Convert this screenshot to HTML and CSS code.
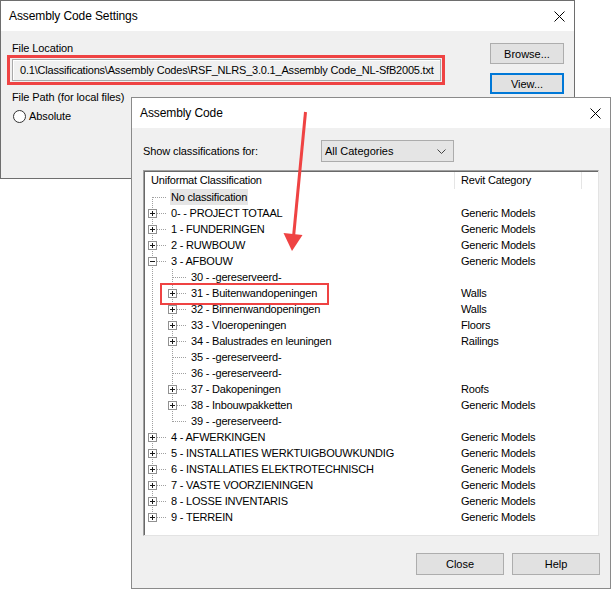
FILE: index.html
```html
<!DOCTYPE html>
<html>
<head>
<meta charset="utf-8">
<link rel="stylesheet" href="styles.css">
</head>
<body>
<div class="desk">

  <div class="win win1">
    <div class="titlebar">
      <span class="ttl">Assembly Code Settings</span>
      <svg class="xicon" width="11" height="11" viewBox="0 0 11 11"><path d="M0.5 0.5L10.5 10.5M10.5 0.5L0.5 10.5" stroke="#000" stroke-width="1"/></svg>
    </div>
    <div class="body1">
      <div class="leftcol">
        <div class="lab">File Location</div>
        <div class="field">0.1\Classifications\Assembly Codes\RSF_NLRS_3.0.1_Assembly Code_NL-SfB2005.txt</div>
        <div class="lab lab2">File Path (for local files)</div>
        <div class="radiorow"><span class="radio"></span><span>Absolute</span></div>
      </div>
      <div class="rightcol">
        <div class="btn">Browse...</div>
        <div class="btn btn-focus">View...</div>
      </div>
    </div>
  </div>

  <div class="win win2">
    <div class="titlebar tb2">
      <span class="ttl">Assembly Code</span>
      <svg class="xicon" width="11" height="11" viewBox="0 0 11 11"><path d="M0.5 0.5L10.5 10.5M10.5 0.5L0.5 10.5" stroke="#000" stroke-width="1"/></svg>
    </div>
    <div class="body2">
      <div class="showrow">
        <span class="showlab">Show classifications for:</span>
        <div class="combo"><span>All Categories</span>
          <svg width="9" height="5" viewBox="0 0 9 5"><path d="M0.5 0.5L4.5 4.5L8.5 0.5" stroke="#444" fill="none"/></svg>
        </div>
      </div>
      <div class="treebox">
        <div class="hdr"><div class="h1">Uniformat Classification</div><div class="h2">Revit Category</div></div>
        <div class="row"><div class="tc"><span class="c first"></span><span class="lbl sel">No classification</span></div><div class="cat"></div></div>
        <div class="row"><div class="tc"><span class="c tee"><i class="bx"></i></span><span class="lbl">0- - PROJECT TOTAAL</span></div><div class="cat">Generic Models</div></div>
        <div class="row"><div class="tc"><span class="c tee"><i class="bx"></i></span><span class="lbl">1 - FUNDERINGEN</span></div><div class="cat">Generic Models</div></div>
        <div class="row"><div class="tc"><span class="c tee"><i class="bx"></i></span><span class="lbl">2 - RUWBOUW</span></div><div class="cat">Generic Models</div></div>
        <div class="row"><div class="tc"><span class="c tee"><i class="bx minus"></i></span><span class="lbl">3 - AFBOUW</span></div><div class="cat">Generic Models</div></div>
        <div class="row"><div class="tc"><span class="c vert"></span><span class="c tee"></span><span class="lbl">30 - -gereserveerd-</span></div><div class="cat"></div></div>
        <div class="row"><div class="tc"><span class="c vert"></span><span class="c tee"><i class="bx"></i></span><span class="lbl">31 - Buitenwandopeningen</span></div><div class="cat">Walls</div></div>
        <div class="row"><div class="tc"><span class="c vert"></span><span class="c tee"><i class="bx"></i></span><span class="lbl">32 - Binnenwandopeningen</span></div><div class="cat">Walls</div></div>
        <div class="row"><div class="tc"><span class="c vert"></span><span class="c tee"><i class="bx"></i></span><span class="lbl">33 - Vloeropeningen</span></div><div class="cat">Floors</div></div>
        <div class="row"><div class="tc"><span class="c vert"></span><span class="c tee"><i class="bx"></i></span><span class="lbl">34 - Balustrades en leuningen</span></div><div class="cat">Railings</div></div>
        <div class="row"><div class="tc"><span class="c vert"></span><span class="c tee"></span><span class="lbl">35 - -gereserveerd-</span></div><div class="cat"></div></div>
        <div class="row"><div class="tc"><span class="c vert"></span><span class="c tee"></span><span class="lbl">36 - -gereserveerd-</span></div><div class="cat"></div></div>
        <div class="row"><div class="tc"><span class="c vert"></span><span class="c tee"><i class="bx"></i></span><span class="lbl">37 - Dakopeningen</span></div><div class="cat">Roofs</div></div>
        <div class="row"><div class="tc"><span class="c vert"></span><span class="c tee"><i class="bx"></i></span><span class="lbl">38 - Inbouwpakketten</span></div><div class="cat">Generic Models</div></div>
        <div class="row"><div class="tc"><span class="c vert"></span><span class="c last"></span><span class="lbl">39 - -gereserveerd-</span></div><div class="cat"></div></div>
        <div class="row"><div class="tc"><span class="c tee"><i class="bx"></i></span><span class="lbl">4 - AFWERKINGEN</span></div><div class="cat">Generic Models</div></div>
        <div class="row"><div class="tc"><span class="c tee"><i class="bx"></i></span><span class="lbl">5 - INSTALLATIES WERKTUIGBOUWKUNDIG</span></div><div class="cat">Generic Models</div></div>
        <div class="row"><div class="tc"><span class="c tee"><i class="bx"></i></span><span class="lbl">6 - INSTALLATIES ELEKTROTECHNISCH</span></div><div class="cat">Generic Models</div></div>
        <div class="row"><div class="tc"><span class="c tee"><i class="bx"></i></span><span class="lbl">7 - VASTE VOORZIENINGEN</span></div><div class="cat">Generic Models</div></div>
        <div class="row"><div class="tc"><span class="c tee"><i class="bx"></i></span><span class="lbl">8 - LOSSE INVENTARIS</span></div><div class="cat">Generic Models</div></div>
        <div class="row"><div class="tc"><span class="c last"><i class="bx"></i></span><span class="lbl">9 - TERREIN</span></div><div class="cat">Generic Models</div></div>
      </div>
      <div class="btnrow">
        <div class="btn btn2">Close</div>
        <div class="btn btn2">Help</div>
      </div>
    </div>
  </div>

  <div class="mark mark-field"></div>
  <div class="mark mark-row"></div>
  <svg class="arrow" width="611" height="589" viewBox="0 0 611 589">
    <line x1="305.5" y1="112" x2="293.6" y2="236" stroke="#ef4343" stroke-width="3"/>
    <polygon points="283.5,233 302.5,235 292,251" fill="#ef4343"/>
  </svg>
</div>
</body>
</html>
```

FILE: styles.css
```css
html, body {
  margin: 0;
  padding: 0;
  background: #fff;
}
.desk {
  position: relative;
  width: 611px;
  height: 589px;
  overflow: hidden;
  font-family: "Liberation Sans", Arial, sans-serif;
  font-size: 11px;
  color: #000;
}
.win {
  position: absolute;
  box-sizing: border-box;
  background: #f0f0f0;
  display: flex;
  flex-direction: column;
}
.win1 {
  left: 0;
  top: 0;
  width: 575px;
  height: 179px;
  border: 1px solid #6e6e6e;
}
.win2 {
  left: 131px;
  top: 97px;
  width: 480px;
  height: 492px;
  border: 1px solid #8a8a8a;
}
.titlebar {
  flex: none;
  height: 30px;
  background: #fff;
  display: flex;
  align-items: center;
  justify-content: space-between;
  padding: 0 9px 0 8px;
  font-size: 12px;
}
.ttl {
  letter-spacing: -0.1px;
}
.xicon {
  display: block;
}
.body1 {
  flex: 1;
  display: flex;
  justify-content: space-between;
  padding: 9px 10px 0 11px;
}
.leftcol {
  display: flex;
  flex-direction: column;
  letter-spacing: -0.1px;
}
.lab {
  line-height: 16px;
}
.lab2 {
  margin-top: 8px;
}
.field {
  margin-top: 3px;
  width: 429px;
  height: 22px;
  box-sizing: border-box;
  border: 1px solid #a9a9a9;
  box-shadow: inset 1px 1px 0 #fff;
  background: #f0f0f0;
  padding-left: 7px;
  line-height: 20px;
  white-space: nowrap;
  overflow: hidden;
  font-size: 11px;
  letter-spacing: -0.2px;
}
.radiorow {
  margin-top: 3px;
  display: flex;
  align-items: center;
  gap: 3px;
  line-height: 16px;
  padding-left: 1px;
}
.radio {
  width: 13px;
  height: 13px;
  box-sizing: border-box;
  border: 1px solid #333;
  border-radius: 50%;
  background: #fff;
}
.rightcol {
  display: flex;
  flex-direction: column;
  gap: 9px;
  margin-top: 3px;
}
.btn {
  width: 74px;
  height: 21px;
  box-sizing: border-box;
  background: #e1e1e1;
  border: 1px solid #adadad;
  display: flex;
  align-items: center;
  justify-content: center;
}
.btn-focus {
  border: 2px solid #0078d7;
}
.body2 {
  flex: 1;
  display: flex;
  flex-direction: column;
  padding: 12px 11px 13px 11px;
}
.showrow {
  display: flex;
  align-items: center;
  height: 22px;
}
.showlab {
  width: 178px;
  letter-spacing: -0.1px;
}
.combo {
  width: 133px;
  height: 22px;
  box-sizing: border-box;
  background: #e5e5e5;
  border: 1px solid #acacac;
  display: flex;
  align-items: center;
  justify-content: space-between;
  padding: 0 7px 0 3px;
}
.combo svg {
  display: block;
}
.treebox {
  margin-top: 8px;
  flex: 1;
  background: #fff;
  border: 1px solid;
  border-color: #a0a0a0 #e3e3e3 #e3e3e3 #a0a0a0;
  padding: 1px;
  box-shadow: inset 1px 1px 0 #696969;
  letter-spacing: -0.2px;
}
.hdr {
  display: flex;
  height: 17px;
  line-height: 17px;
}
.h1 {
  width: 310px;
  box-sizing: border-box;
  padding-left: 6px;
  border-right: 1px solid #e5e5e5;
}
.h2 {
  width: 127px;
  box-sizing: border-box;
  padding-left: 6px;
  border-right: 1px solid #e5e5e5;
}
.row {
  display: flex;
  height: 16px;
  line-height: 16px;
}
.tc {
  width: 309px;
  flex: none;
  display: flex;
  padding-left: 1px;
  box-sizing: border-box;
}
.cat {
  padding-left: 7px;
  white-space: nowrap;
}
.lbl {
  margin-left: 4px;
  padding: 0 1px;
  white-space: nowrap;
}
.sel {
  background: #e5e5e5;
}
.c {
  display: block;
  flex: none;
  width: 20px;
  height: 16px;
  background-repeat: no-repeat;
}
.vert {
  background-image: repeating-linear-gradient(#a0a0a0 0 1px, transparent 1px 2px);
  background-position: 6px 0;
  background-size: 1px 16px;
}
.tee {
  background-image:
    repeating-linear-gradient(#a0a0a0 0 1px, transparent 1px 2px),
    repeating-linear-gradient(90deg, transparent 0 1px, #a0a0a0 1px 2px);
  background-position: 6px 0, 6px 8px;
  background-size: 1px 16px, 14px 1px;
}
.last {
  background-image:
    repeating-linear-gradient(#a0a0a0 0 1px, transparent 1px 2px),
    repeating-linear-gradient(90deg, transparent 0 1px, #a0a0a0 1px 2px);
  background-position: 6px 0, 6px 8px;
  background-size: 1px 9px, 14px 1px;
}
.first {
  background-image:
    repeating-linear-gradient(#a0a0a0 0 1px, transparent 1px 2px),
    repeating-linear-gradient(90deg, transparent 0 1px, #a0a0a0 1px 2px);
  background-position: 6px 8px, 6px 8px;
  background-size: 1px 8px, 14px 1px;
}
.bx {
  display: block;
  width: 9px;
  height: 9px;
  box-sizing: border-box;
  margin: 4px 0 0 2px;
  border: 1px solid #919191;
  background:
    linear-gradient(#1a1a1a, #1a1a1a) center / 5px 1px no-repeat,
    linear-gradient(#1a1a1a, #1a1a1a) center / 1px 5px no-repeat,
    #fff;
}
.bx.minus {
  background:
    linear-gradient(#1a1a1a, #1a1a1a) center / 5px 1px no-repeat,
    #fff;
}
.btnrow {
  margin-top: 17px;
  display: flex;
  justify-content: flex-end;
  gap: 8px;
  padding-right: 0;
  margin-right: -1px;
}
.btn2 {
  width: 88px;
  height: 22px;
}
.mark {
  position: absolute;
  box-sizing: border-box;
  pointer-events: none;
}
.mark-field {
  left: 7px;
  top: 55px;
  width: 438px;
  height: 30px;
  border: 3px solid #ef4343;
}
.mark-row {
  left: 160px;
  top: 283px;
  width: 169px;
  height: 22px;
  border: 2px solid #ef4343;
}
.arrow {
  position: absolute;
  left: 0;
  top: 0;
  pointer-events: none;
}
```
